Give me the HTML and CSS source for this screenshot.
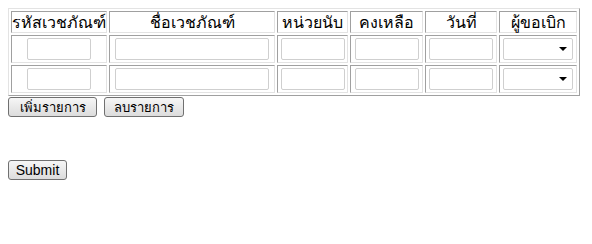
FILE: index.html
```html
<!DOCTYPE html>
<html lang="th">
  <head>
    <meta charset="UTF-8" />
    <title>เบิกเวชภัณฑ์</title>
    <link rel="stylesheet" href="styles.css">
  </head>
  <body>
    <form class="req-form">
      <table class="item-table">
        <tr>
          <th class="c-code">รหัสเวชภัณฑ์</th>
          <th class="c-name">ชื่อเวชภัณฑ์</th>
          <th class="c-unit">หน่วยนับ</th>
          <th class="c-left">คงเหลือ</th>
          <th class="c-date">วันที่</th>
          <th class="c-user">ผู้ขอเบิก</th>
        </tr>
        <tr>
          <td><input type="text" class="box" /></td>
          <td><input type="text" class="box box-wide" /></td>
          <td><input type="text" class="box" /></td>
          <td><input type="text" class="box" /></td>
          <td><input type="text" class="box" /></td>
          <td><span class="pick"><select class="pick-box"><option></option></select></span></td>
        </tr>
        <tr>
          <td><input type="text" class="box" /></td>
          <td><input type="text" class="box box-wide" /></td>
          <td><input type="text" class="box" /></td>
          <td><input type="text" class="box" /></td>
          <td><input type="text" class="box" /></td>
          <td><span class="pick"><select class="pick-box"><option></option></select></span></td>
        </tr>
      </table>
      <div class="row-actions">
        <button type="button" class="btn btn-add">เพิ่มรายการ</button>
        <button type="button" class="btn btn-del">ลบรายการ</button>
      </div>
      <div class="submit-row">
        <button type="submit" class="btn btn-submit">Submit</button>
      </div>
    </form>
  </body>
</html>
```

FILE: styles.css
```css
body {
  margin: 8px;
  font-family: "Noto Sans", "DejaVu Sans", sans-serif;
  background-color: #ffffff;
  color: #000000;
}

/* ตารางรายการ */
.item-table {
  border-collapse: separate;
  border-spacing: 2px;
  border: 1px solid;
  border-color: #e3e3e3 #a0a0a0 #a0a0a0 #e3e3e3;
  width: 572px;
}

.item-table th,
.item-table td {
  border: 1px solid;
  border-color: #a0a0a0 #e3e3e3 #e3e3e3 #a0a0a0;
  padding: 0;
  text-align: center;
}

.item-table th {
  height: 20px;
  font-size: 16px;
  font-weight: normal;
  line-height: 20px;
}

.item-table td {
  height: 26px;
}

.c-code { width: 94px; }
.c-name { width: 164px; }
.c-unit { width: 69px; }
.c-left { width: 71px; }
.c-date { width: 70px; }
.c-user { width: 76px; }

.box {
  display: block;
  margin: 0 auto;
  box-sizing: border-box;
  width: 64px;
  height: 22px;
  border: 1px solid #cfcfcf;
  border-radius: 2px;
  background-color: #ffffff;
}

.box-wide {
  width: 154px;
}

.pick {
  position: relative;
  display: block;
  width: 70px;
  margin: 0 auto;
}

.pick-box {
  display: block;
  box-sizing: border-box;
  width: 70px;
  height: 22px;
  border: 1px solid #cfcfcf;
  border-radius: 2px;
  background-color: #ffffff;
  appearance: none;
  -webkit-appearance: none;
}

/* ลูกศร dropdown */
.pick::after {
  content: "";
  position: absolute;
  right: 6px;
  top: 9px;
  border-left: 4px solid transparent;
  border-right: 4px solid transparent;
  border-top: 4px solid #000000;
}

/* ปุ่ม */
.row-actions {
  display: flex;
  gap: 7px;
  margin-top: 1px;
}

.btn {
  box-sizing: border-box;
  height: 20px;
  padding: 0;
  border: 1px solid #707070;
  border-radius: 3px;
  background: linear-gradient(#f6f6f6, #dcdcdc);
  color: #000000;
  font-size: 13px;
  line-height: 16px;
  font-family: "Noto Sans", "DejaVu Sans", sans-serif;
}

.btn-add { width: 89px; }
.btn-del { width: 80px; }

.submit-row {
  margin-top: 41px;
}

.btn-submit {
  width: 59px;
  font-family: "Liberation Sans", Arial, sans-serif;
  font-size: 14px;
}
```
